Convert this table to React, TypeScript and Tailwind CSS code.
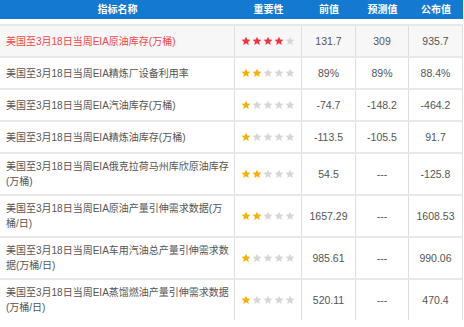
import React from 'react';

type Row = {
  name: string;
  stars: number;
  prev: string;
  forecast: string;
  actual: string;
  hot?: boolean;
};

const rows: Row[] = [
  { name: '美国至3月18日当周EIA原油库存(万桶)', stars: 4, prev: '131.7', forecast: '309', actual: '935.7', hot: true },
  { name: '美国至3月18日当周EIA精炼厂设备利用率', stars: 2, prev: '89%', forecast: '89%', actual: '88.4%' },
  { name: '美国至3月18日当周EIA汽油库存(万桶)', stars: 1, prev: '-74.7', forecast: '-148.2', actual: '-464.2' },
  { name: '美国至3月18日当周EIA精炼油库存(万桶)', stars: 1, prev: '-113.5', forecast: '-105.5', actual: '91.7' },
  { name: '美国至3月18日当周EIA俄克拉荷马州库欣原油库存(万桶)', stars: 2, prev: '54.5', forecast: '---', actual: '-125.8' },
  { name: '美国至3月18日当周EIA原油产量引伸需求数据(万桶/日)', stars: 2, prev: '1657.29', forecast: '---', actual: '1608.53' },
  { name: '美国至3月18日当周EIA车用汽油总产量引伸需求数据(万桶/日)', stars: 1, prev: '985.61', forecast: '---', actual: '990.06' },
  { name: '美国至3月18日当周EIA蒸馏燃油产量引伸需求数据(万桶/日)', stars: 1, prev: '520.11', forecast: '---', actual: '470.4' },
];

const Star = ({ color }: { color: string }) => (
  <svg width="10" height="10" viewBox="0 0 24 24" fill={color}>
    <path d="M12 1.5l3.1 6.9 7.4.7-5.6 5 1.7 7.4L12 17.6l-6.6 3.9 1.7-7.4-5.6-5 7.4-.7z" />
  </svg>
);

const Stars = ({ n, hot }: { n: number; hot?: boolean }) => (
  <div className="flex items-center justify-center gap-px">
    {[0, 1, 2, 3, 4].map((i) => (
      <Star key={i} color={i < n ? (hot ? '#f4333f' : '#f7b100') : '#d6d6d6'} />
    ))}
  </div>
);

const cols = 'grid grid-cols-[235px_67px_54px_53px_54px]';
const cell = 'flex items-center justify-center border-r border-[#dedede] py-[5px] text-[10.5px]';

export default function App() {
  return (
    <div
      className="w-[463px] bg-white text-[10px] leading-[15px] text-[#555]"
      style={{ fontFamily: '"Liberation Sans", "Noto Sans CJK SC", sans-serif' }}
    >
      {/* header */}
      <div className={`${cols} h-[19px] bg-[#1479d0] font-bold text-white`}>
        <div className="flex items-center justify-center">指标名称</div>
        <div className="flex items-center justify-center">重要性</div>
        <div className="flex items-center justify-center">前值</div>
        <div className="flex items-center justify-center">预测值</div>
        <div className="flex items-center justify-center">公布值</div>
      </div>
      <div className="h-[5px]" />

      {rows.map((r) => (
        <div
          key={r.name}
          className={`${cols} border-t-2 border-[#e8e8e8] ${r.hot ? 'bg-[#f7f7f7]' : ''}`}
        >
          <div className="flex min-h-[30px] items-center border-r border-[#dedede] py-[5px] pl-[6px] pr-[4px]">
            <span className={r.hot ? 'text-[#f2454a]' : ''}>{r.name}</span>
          </div>
          <div className={cell}>
            <Stars n={r.stars} hot={r.hot} />
          </div>
          <div className={cell}>{r.prev}</div>
          <div className={cell}>{r.forecast}</div>
          <div className={cell}>{r.actual}</div>
        </div>
      ))}
    </div>
  );
}
